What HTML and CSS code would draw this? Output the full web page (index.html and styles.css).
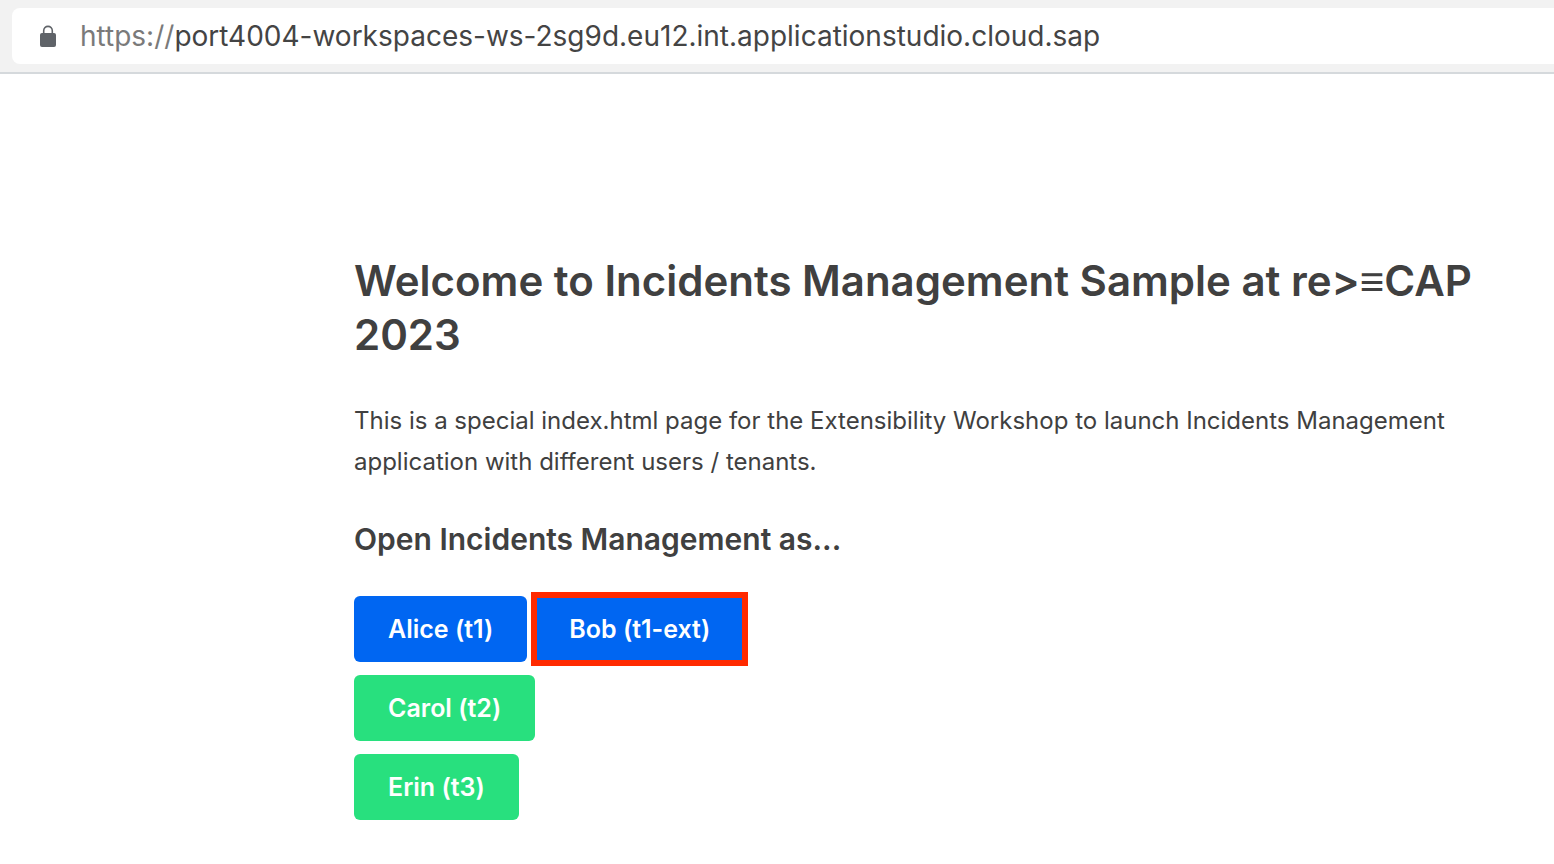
FILE: index.html
```html
<!DOCTYPE html>
<html lang="en">
<head>
<meta charset="utf-8">
<title>Incidents Management</title>
<link rel="stylesheet" href="styles.css">
</head>
<body>
<header class="toolbar">
  <div class="address">
    <svg class="lock" viewBox="0 0 16 22" aria-hidden="true"><path d="M2 8h12a2 2 0 0 1 2 2v10a2 2 0 0 1-2 2H2a2 2 0 0 1-2-2V10a2 2 0 0 1 2-2z" fill="#5f6368"/><path d="M3.700 9V5.700a4.300 4.300 0 0 1 8.600 0V9" fill="none" stroke="#5f6368" stroke-width="1.600"/></svg>
    <span class="url"><span class="scheme">https://</span>port4004-workspaces-ws-2sg9d.eu12.int.applicationstudio.cloud.sap</span>
  </div>
</header>
<main class="content">
  <h1 class="title">Welcome to Incidents Management Sample at re&gt;≡CAP 2023</h1>
  <p class="intro">This is a special index.html page for the Extensibility Workshop to launch Incidents Management application with different users / tenants.</p>
  <h2 class="subtitle">Open Incidents Management as...</h2>
  <div class="tenants">
    <div class="row">
      <button class="btn blue">Alice (t1)</button>
      <button class="btn blue marked">Bob (t1-ext)</button>
    </div>
    <div class="row"><button class="btn green">Carol (t2)</button></div>
    <div class="row"><button class="btn green">Erin (t3)</button></div>
  </div>
</main>
</body>
</html>
```
FILE: styles.css
```css
body {
  margin: 0;
  background: #fff;
  color: #404040;
  font-family: Inter, "Liberation Sans", sans-serif;
}
.toolbar {
  padding: 8px 0 8px 12px;
  background: #f2f2f2;
  border-bottom: 2px solid #d5d9dc;
}
.address {
  display: flex;
  align-items: center;
  gap: 24px;
  height: 56px;
  padding-left: 28px;
  background: #fff;
  border-radius: 8px 0 0 8px;
}
.lock { width: 16px; height: 22px; }
.url {
  font-size: 28px;
  color: #444;
  white-space: nowrap;
}
.scheme { color: #7a7a7a; }
.content { padding: 180px 64px 44px 354px; }
.title {
  margin: 0 0 38px;
  font-size: 42px;
  line-height: 54px;
  font-weight: 600;
}
.intro {
  margin: 0 0 36px;
  font-size: 24px;
  line-height: 41px;
}
.subtitle {
  margin: 0 0 36px;
  font-size: 30px;
  line-height: 42px;
  font-weight: 600;
}
.tenants { display: flex; flex-direction: column; gap: 13px; }
.row { display: flex; gap: 8px; }
.btn {
  height: 66px;
  padding: 0 34px;
  border: 0;
  border-radius: 6px;
  color: #fff;
  font: inherit;
  font-size: 25px;
  font-weight: 600;
}
.blue { background: #0066f2; }
.green { background: #28e07e; }
.marked {
  border-radius: 0;
  outline: 6px solid #ff2a00;
  outline-offset: -2px;
}
```
